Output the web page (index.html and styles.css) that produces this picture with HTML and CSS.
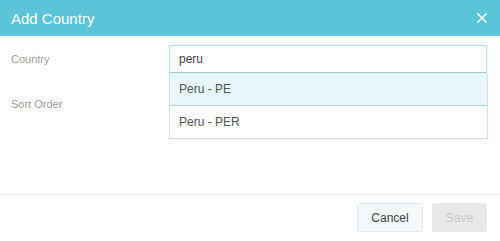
FILE: index.html
```html
<!DOCTYPE html>
<html lang="en">

<head>
    <meta charset="UTF-8">
    <meta name="viewport" content="width=device-width, initial-scale=1.0">
    <title>Add Country</title>
    <link rel="stylesheet" href="styles.css">
</head>

<body>
    <div class="modal">
        <div class="modal-header">
            <h2>Add Country</h2>
            <button class="close-btn" type="button" aria-label="Close">
                <svg width="12" height="12" viewBox="0 0 12 12">
                    <path d="M1.5 1.5 L10.5 10.5 M10.5 1.5 L1.5 10.5" stroke="#fff" stroke-width="1.5" fill="none" />
                </svg>
            </button>
        </div>
        <div class="modal-body">
            <div class="form-row">
                <label for="country">Country</label>
                <div class="field">
                    <input type="text" id="country" value="peru" class="active">
                    <ul class="suggestions">
                        <li class="selected">Peru - PE</li>
                        <li>Peru - PER</li>
                    </ul>
                </div>
            </div>
            <div class="form-row">
                <label for="sortOrder">Sort Order</label>
                <div class="field">
                    <input type="text" id="sortOrder">
                </div>
            </div>
        </div>
        <div class="modal-footer">
            <button class="btn btn-cancel" type="button">Cancel</button>
            <button class="btn btn-save" type="button" disabled>Save</button>
        </div>
    </div>
</body>

</html>
```

FILE: styles.css
```css
body {
    font-family: "Liberation Sans", Arial, sans-serif;
    margin: 0;
    background: white;
}

.modal {
    width: 500px;
    height: 241px;
    display: flex;
    flex-direction: column;
}

.modal-header {
    background-color: #5bc4d8;
    height: 36px;
    display: flex;
    align-items: center;
    justify-content: space-between;
    padding: 0 11px;
}

.modal-header h2 {
    margin: 0;
    color: white;
    font-size: 15px;
    font-weight: normal;
}

.close-btn {
    background: none;
    border: none;
    padding: 0;
    margin-right: 1px;
    display: flex;
    cursor: pointer;
}

.modal-body {
    flex: 1;
    padding: 9px 13px 0 11px;
}

.form-row {
    display: flex;
    align-items: center;
    margin-bottom: 17px;
}

label {
    width: 158px;
    font-size: 11px;
    color: #a0a0a0;
}

.field {
    flex: 1;
    position: relative;
}

input {
    width: 100%;
    height: 28px;
    padding: 0 9px;
    border: 1px solid #ddd;
    box-sizing: border-box;
    font-family: inherit;
    font-size: 12px;
    color: #444;
    outline: none;
}

input.active {
    border-color: #b2dde6;
    border-bottom-color: #a3c9d1;
}

.suggestions {
    position: absolute;
    top: 28px;
    left: 0;
    right: -1px;
    margin: 0;
    padding: 0;
    list-style: none;
    background: white;
    border: 1px solid #ddd;
    border-top: none;
    box-shadow: 0 1px 2px rgba(0, 0, 0, 0.06);
    z-index: 2;
}

.suggestions li {
    height: 32px;
    line-height: 32px;
    padding: 0 9px;
    font-size: 12px;
    color: #555;
    border-bottom: 1px solid #e6e6e6;
}

.suggestions li:last-child {
    border-bottom: none;
}

.suggestions li.selected {
    background: #e6f6fa;
    border-bottom-color: #b8d6dd;
}

.modal-footer {
    box-sizing: border-box;
    border-top: 1px solid #f2f2f2;
    height: 47px;
    display: flex;
    justify-content: flex-end;
    align-items: flex-start;
    padding: 8px 13px 0 0;
    gap: 9px;
}

.btn {
    height: 29px;
    font-family: inherit;
    font-size: 12px;
    border-radius: 2px;
    padding: 0;
}

.btn-cancel {
    width: 66px;
    background: #f4f8fb;
    border: 1px solid #e3e8ec;
    color: #444;
    cursor: pointer;
}

.btn-save {
    width: 55px;
    background: #e8e8e8;
    border: 1px solid #e8e8e8;
    color: #c8c8c8;
}
```
